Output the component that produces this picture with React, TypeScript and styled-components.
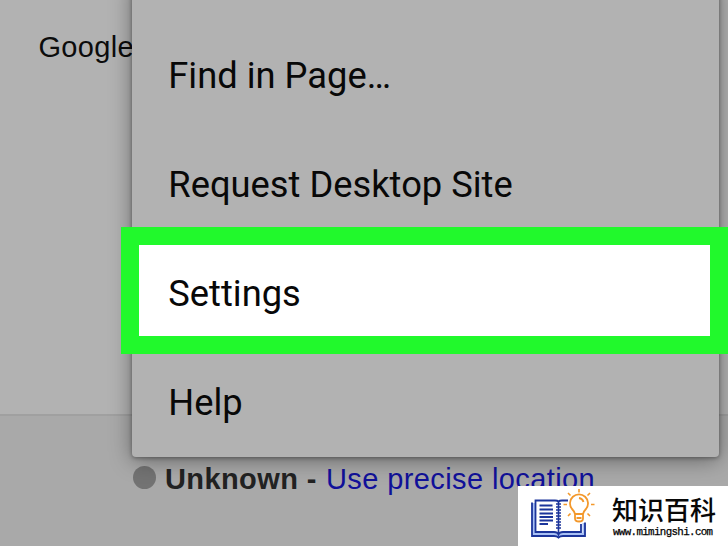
import React from 'react';
import styled, { createGlobalStyle } from 'styled-components';

const GlobalStyle = createGlobalStyle`
  * { box-sizing: border-box; }
  body { margin: 0; overflow: hidden; }
`;

const Page = styled.div`
  position: relative;
  display: flex;
  flex-direction: column;
  width: 728px;
  height: 546px;
  overflow: hidden;
  background: #b2b2b2;
  font-family: 'Liberation Sans', Arial, sans-serif;
`;

const Results = styled.main`
  flex: 0 0 416px;
  padding: 31px 0 0 38.5px;
  border-bottom: 2px solid #a0a0a0;
  color: #0c0c0c;
  font-size: 29px;
  letter-spacing: 0.3px;
  line-height: 33px;
`;

const Footer = styled.footer`
  flex: 1;
  display: flex;
  align-items: flex-start;
  padding: 46px 0 0 133px;
  background: #a9a9a9;
  font-size: 29px;
  line-height: 34px;
  white-space: pre;
`;

const Dot = styled.span`
  width: 23px;
  height: 23px;
  margin: 4px 9px 0 0;
  border-radius: 50%;
  background: #737373;
`;

const Place = styled.strong`
  width: 161px;
  color: #222;
  letter-spacing: 0.4px;
`;

const Link = styled.a`
  color: #11119a;
  letter-spacing: 0.4px;
`;

const Menu = styled.nav`
  position: absolute;
  left: 132px;
  top: -20px;
  width: 587px;
  height: 477px;
  padding-top: 41px;
  border-radius: 0 0 4px 4px;
  background: #b2b2b2;
  box-shadow: 0 3px 22px rgba(0, 0, 0, 0.4), 0 1px 4px rgba(0, 0, 0, 0.35);
`;

const MenuItem = styled.div`
  display: flex;
  align-items: center;
  height: 109px;
  padding-left: 36.3px;
  color: #080808;
  font-family: Roboto, sans-serif;
  font-size: 36.3px;
`;

const Highlight = styled.div`
  position: absolute;
  left: 121px;
  top: 227px;
  width: 607px;
  height: 127px;
  border: 18px solid #21f92c;
  background: #fff;
  ${MenuItem} {
    height: 96px;
    padding-left: 29.3px;
  }
`;

const Watermark = styled.aside`
  position: absolute;
  left: 518px;
  top: 486px;
  display: flex;
  width: 210px;
  height: 60px;
  background: #fff;
`;

const BrandText = styled.div`
  display: flex;
  flex-direction: column;
  margin-left: 4px;
  white-space: nowrap;
`;

const BrandName = styled.div`
  height: 40px;
  padding-top: 6px;
  color: #080808;
  font: 500 26px/34px 'Noto Sans CJK SC', sans-serif;
`;

const BrandUrl = styled.div`
  padding-left: 1px;
  color: #000;
  font: 10.8px/12px 'Liberation Mono', monospace;
  letter-spacing: -0.63px;
  -webkit-text-stroke: 0.25px #000;
`;

const Logo = styled.svg`
  flex: 0 0 90px;
  width: 90px;
  height: 60px;
`;

const items = ['Find in Page…', 'Request Desktop Site', 'Settings', 'Help'];

function BookLogo() {
  return (
    <Logo viewBox="0 0 90 60" fill="none">
      <path d="M15.500 17v31.500H37q2.500 0 3.500 1.500 1-1.500 3.500-1.500h22V37" stroke="#a9c1f5" strokeWidth="3" />
      <path d="M14 16.500V50h22q3 0 4.500 1.500Q42 50 45 50h22V36.500" stroke="#1c359b" strokeWidth="1.8" />
      <path d="M50 14.500h-6q-2.500 0-3.500 1-1-1-3.500-1H17.500V46H36q3.500 0 4.500 2.500Q41.500 46 45 46h18v-8" stroke="#1c359b" strokeWidth="1.8" />
      <path d="M40.500 16v32" stroke="#1c359b" strokeWidth="1.6" />
      <path d="M38 18h5M38 21h5M38 24h5M38 27h5M38 30h5M38 33h5M38 36h5M38 39h5M38 42h5" stroke="#1c359b" strokeWidth="1.6" />
      <path d="M21.500 19.500h13M21.500 23.500h13.500M21.500 27.500h13.500M21.500 31h13.500M21.500 34.500h13.500M21.500 38h8.500" stroke="#1c359b" strokeWidth="1.8" />
      <path d="M57 28q-.5-2.500-3-5a9 9 0 1 1 14 0q-2.500 2.500-3 5zM57 27.500v5q0 3 4 3t4-3v-5M61 12q3.500.5 4.500 4" stroke="#f3982b" strokeWidth="1.8" />
      <path d="M61 3v3.500M50 7l2.500 2.500M72 7l-2.500 2.500M45.500 18.500H49M73 18.500h3.500M50 30l2.500-2.500M72 30l-2.500-2.500" stroke="#f3982b" strokeWidth="1.6" />
      <path d="M58.500 32h5" stroke="#f3982b" strokeWidth="2" />
    </Logo>
  );
}

export default function App() {
  return (
    <>
      <GlobalStyle />
      <Page>
        <Results>Google</Results>
        <Footer>
          <Dot />
          <Place>Unknown -</Place>
          <Link>Use precise location</Link>
        </Footer>
        <Menu>
          {items.map((label) => (
            <MenuItem key={label}>{label === 'Settings' ? '' : label}</MenuItem>
          ))}
        </Menu>
        <Highlight>
          <MenuItem>Settings</MenuItem>
        </Highlight>
        <Watermark>
          <BookLogo />
          <BrandText>
            <BrandName>知识百科</BrandName>
            <BrandUrl>www.mimingshi.com</BrandUrl>
          </BrandText>
        </Watermark>
      </Page>
    </>
  );
}
